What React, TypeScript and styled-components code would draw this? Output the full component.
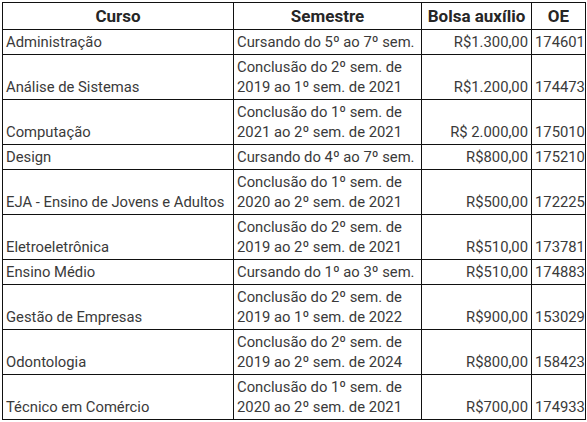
import React from "react";
import styled, { createGlobalStyle } from "styled-components";

const Global = createGlobalStyle`
  html, body { margin: 0; padding: 0; background: #fff; }
  body { font-family: Roboto, "Noto Sans", sans-serif; }
`;

const Wrap = styled.div`
  padding: 2px 0 0 2px;
`;

const Table = styled.table`
  border-collapse: collapse;
  font-family: Roboto, "Noto Sans", sans-serif;
  font-size: 14.8px;
  line-height: 20px;
  color: #3a3a3a;
  table-layout: fixed;
  width: 583px;
`;

const Th = styled.th`
  border: 1px solid #111;
  font-size: 17px;
  font-weight: 700;
  line-height: 20px;
  color: #262626;
  text-align: center;
  padding: 3px 2px 3px;
  vertical-align: middle;
  white-space: nowrap;
  overflow: hidden;
`;

const Td = styled.td<{ $align?: "left" | "right" }>`
  border: 1px solid #111;
  padding: 2px 3px 2px 3px;
  text-align: ${(p) => p.$align ?? "left"};
  vertical-align: bottom;
  white-space: nowrap;
  overflow: hidden;
`;

const Line = styled.div`
  height: 20px;
  line-height: 20px;
`;

const rows: [string, string[], string, string][] = [
  ["Administração", ["Cursando do 5º ao 7º sem."], "R$1.300,00", "174601"],
  ["Análise de Sistemas", ["Conclusão do 2º sem. de", "2019 ao 1º sem. de 2021"], "R$1.200,00", "174473"],
  ["Computação", ["Conclusão do 1º sem. de", "2021 ao 2º sem. de 2021"], "R$ 2.000,00", "175010"],
  ["Design", ["Cursando do 4º ao 7º sem."], "R$800,00", "175210"],
  ["EJA - Ensino de Jovens e Adultos", ["Conclusão do 1º sem. de", "2020 ao 2º sem. de 2021"], "R$500,00", "172225"],
  ["Eletroeletrônica", ["Conclusão do 2º sem. de", "2019 ao 2º sem. de 2021"], "R$510,00", "173781"],
  ["Ensino Médio", ["Cursando do 1º ao 3º sem."], "R$510,00", "174883"],
  ["Gestão de Empresas", ["Conclusão do 2º sem. de", "2019 ao 1º sem. de 2022"], "R$900,00", "153029"],
  ["Odontologia", ["Conclusão do 2º sem. de", "2019 ao 2º sem. de 2024"], "R$800,00", "158423"],
  ["Técnico em Comércio", ["Conclusão do 1º sem. de", "2020 ao 2º sem. de 2021"], "R$700,00", "174933"],
];

export default function App() {
  return (
    <Wrap>
      <Global />
      <Table>
        <colgroup>
          <col style={{ width: 231 }} />
          <col style={{ width: 188 }} />
          <col style={{ width: 110 }} />
          <col style={{ width: 54 }} />
        </colgroup>
        <thead>
          <tr>
            <Th>Curso</Th>
            <Th>Semestre</Th>
            <Th>Bolsa auxílio</Th>
            <Th>OE</Th>
          </tr>
        </thead>
        <tbody>
          {rows.map(([curso, sem, bolsa, oe]) => (
            <tr key={curso}>
              <Td>
                <Line>{curso}</Line>
              </Td>
              <Td>
                {sem.map((l, i) => (
                  <Line key={i}>{l}</Line>
                ))}
              </Td>
              <Td $align="right">
                <Line>{bolsa}</Line>
              </Td>
              <Td>
                <Line>{oe}</Line>
              </Td>
            </tr>
          ))}
        </tbody>
      </Table>
    </Wrap>
  );
}
